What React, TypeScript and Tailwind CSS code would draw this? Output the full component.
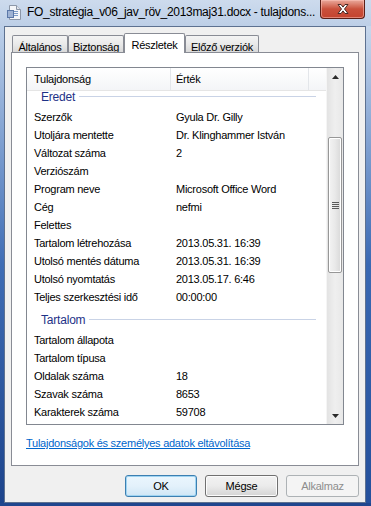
import React from 'react';

const eredet: [string, string][] = [
  ['Szerzők', 'Gyula Dr. Gilly'],
  ['Utoljára mentette', 'Dr. Klinghammer István'],
  ['Változat száma', '2'],
  ['Verziószám', ''],
  ['Program neve', 'Microsoft Office Word'],
  ['Cég', 'nefmi'],
  ['Felettes', ''],
  ['Tartalom létrehozása', '2013.05.31. 16:39'],
  ['Utolsó mentés dátuma', '2013.05.31. 16:39'],
  ['Utolsó nyomtatás', '2013.05.17. 6:46'],
  ['Teljes szerkesztési idő', '00:00:00'],
];

const tartalom: [string, string][] = [
  ['Tartalom állapota', ''],
  ['Tartalom típusa', ''],
  ['Oldalak száma', '18'],
  ['Szavak száma', '8653'],
  ['Karakterek száma', '59708'],
];

const GroupHeader = ({ title }: { title: string }) => (
  <div className="h-[25px] flex items-start pt-[7px] pl-[14px] pr-[10px]">
    <span className="text-[12px] leading-[15px] text-[#1e3287] tracking-[-0.2px]">{title}</span>
    <div className="flex-1 h-px bg-[#c9d3e6] ml-[4px] mt-[6px]" />
  </div>
);

const Row = ({ label, value }: { label: string; value: string }) => (
  <div className="h-[18px] flex items-center pl-[7px]">
    <span className="w-[142px] shrink-0 whitespace-nowrap">{label}</span>
    <span className="whitespace-nowrap">{value}</span>
  </div>
);

const Tab = ({ label, width, active }: { label: string; width: string; active?: boolean }) =>
  active ? (
    <div className={`${width} h-[20px] -mb-px relative z-10 bg-white border border-b-0 border-[#898c95] rounded-t-[2px] flex justify-center pt-[3px]`}>
      {label}
    </div>
  ) : (
    <div className={`${width} h-[17px] border border-b-0 border-[#898c95] rounded-t-[2px] bg-gradient-to-b from-[#f4f4f4] via-[#eaeaea] to-[#d9d9d9] flex justify-center pt-[3px]`}>
      {label}
    </div>
  );

const DocIcon = () => (
  <svg width="16" height="17" viewBox="0 0 16 17">
    <path d="M2.5 1.5h7l4 4v10h-11z" fill="#f4f6f9" stroke="#8c97a8" />
    <path d="M9.5 1.5v4h4" fill="#dfe4ec" stroke="#8c97a8" />
    <rect x="4" y="7" width="7" height="1" fill="#7d9cc8" />
    <rect x="4" y="9" width="7" height="1" fill="#7d9cc8" />
    <rect x="4" y="11" width="7" height="1" fill="#7d9cc8" />
    <rect x="0.5" y="6.5" width="6" height="7" fill="#9fb3d4" stroke="#5b78a8" />
  </svg>
);

const Button = ({ label, width, primary, disabled }: { label: string; width: string; primary?: boolean; disabled?: boolean }) => (
  <div
    className={`${width} h-[22px] rounded-[3px] border flex items-center justify-center ${
      disabled
        ? 'border-[#adb2b5] bg-[#f4f4f4] text-[#8d8d8d]'
        : primary
        ? 'border-[#3c7fb1] bg-gradient-to-b from-[#eaf6fd] via-[#e3f1fb] to-[#cfe6f6] shadow-[inset_0_0_0_1px_#9fd4f2]'
        : 'border-[#707070] bg-gradient-to-b from-[#f2f2f2] via-[#ebebeb] to-[#d4d4d4] shadow-[inset_0_0_0_1px_#fcfcfc]'
    }`}
  >
    {label}
  </div>
);

export default function App() {
  return (
    <div className="w-[371px] h-[506px] flex flex-col overflow-hidden font-['Liberation_Sans',Arial,sans-serif] text-[11px] tracking-[-0.25px] text-black bg-[#c6d6eb]">
      {/* title bar */}
      <div className="h-[26px] shrink-0 flex items-start bg-gradient-to-b from-[#cddbed] to-[#bdcfe7]">
        <div className="ml-[7px] mt-[4px]">
          <DocIcon />
        </div>
        <div className="ml-[4px] mt-[4px] flex-1 text-[12px] leading-[16px] tracking-[-0.3px] text-black whitespace-nowrap overflow-hidden">
          FO_stratégia_v06_jav_röv_2013maj31.docx - tulajdons...
        </div>
        <div className="w-[45px] h-[19px] mr-[6px] ml-[3px] rounded-b-[4px] border border-t-0 border-[#5a1f17] bg-gradient-to-b from-[#e9a99c] via-[#c9503b] to-[#c4432e] shadow-[inset_0_0_0_1px_rgba(255,200,190,0.5)] flex items-center justify-center">
          <svg width="14" height="12" viewBox="0 0 14 12">
            <path d="M2 1.5h3l2 2.6 2-2.6h3l-3.5 4.5 3.5 4.5h-3l-2-2.6-2 2.6h-3l3.5-4.5z" fill="#ffffff" stroke="#4a2a26" strokeWidth="1" strokeLinejoin="round" />
          </svg>
        </div>
      </div>

      <div className="flex-1 flex min-h-0">
        <div className="w-[4px] bg-gradient-to-b from-[#bdd0e9] via-[#3f6db5] to-[#1d448c]" />

        {/* client */}
        <div className="flex-1 flex flex-col border border-[#5d7190] bg-[#f0f0f0]">
          <div className="pt-[6px] pl-[7px] flex items-end h-[25px]">
            <Tab label="Általános" width="w-[56px]" />
            <Tab label="Biztonság" width="w-[56px]" />
            <Tab label="Részletek" width="w-[61px]" active />
            <Tab label="Előző verziók" width="w-[74px]" />
          </div>

          <div className="ml-[6px] w-[348px] h-[414px] bg-white border border-[#898c95] flex flex-col">
            <div className="ml-[14px] mt-[14px] w-[318px] h-[358px] border border-[#828790] flex">
              <div className="flex-1 flex flex-col min-w-0">
                <div className="h-[23px] shrink-0 flex border-b border-[#e5e5e5] bg-gradient-to-b from-white to-[#f4f5f7]">
                  <div className="w-[144px] pl-[7px] flex items-center border-r border-[#e3e6ea]">Tulajdonság</div>
                  <div className="w-[138px] pl-[5px] flex items-center border-r border-[#e3e6ea]">Érték</div>
                  <div className="flex-1" />
                </div>
                <div className="flex-1 overflow-hidden">
                  <div className="-mt-[8px]">
                    <GroupHeader title="Eredet" />
                    {eredet.map(([l, v]) => (
                      <Row key={l} label={l} value={v} />
                    ))}
                    <GroupHeader title="Tartalom" />
                    {tartalom.map(([l, v]) => (
                      <Row key={l} label={l} value={v} />
                    ))}
                  </div>
                </div>
              </div>

              {/* scrollbar */}
              <div className="w-[17px] shrink-0 flex flex-col bg-gradient-to-r from-[#e3e3e3] via-[#efefef] to-[#e8e8e8] border-l border-[#f5f5f5]">
                <div className="h-[17px] flex items-center justify-center">
                  <svg width="7" height="4" viewBox="0 0 7 4">
                    <path d="M0 4 3.5 0 7 4z" fill="#2a2a2a" />
                  </svg>
                </div>
                <div className="h-[52px]" />
                <div className="mx-[1px] h-[136px] rounded-[2px] border border-[#979797] bg-gradient-to-r from-[#f3f3f3] via-[#e9e9e9] to-[#d8d8d8] shadow-[inset_0_0_0_1px_#ffffff] flex items-center justify-center">
                  <div className="flex flex-col gap-[1px]">
                    <div className="w-[7px] h-px bg-[#5a5a5a]" />
                    <div className="w-[7px] h-px bg-[#5a5a5a]" />
                    <div className="w-[7px] h-px bg-[#5a5a5a]" />
                    <div className="w-[7px] h-px bg-[#5a5a5a]" />
                  </div>
                </div>
                <div className="flex-1" />
                <div className="h-[17px] flex items-center justify-center">
                  <svg width="7" height="4" viewBox="0 0 7 4">
                    <path d="M0 0 3.5 4 7 0z" fill="#2a2a2a" />
                  </svg>
                </div>
              </div>
            </div>

            <div className="ml-[14px] mt-[11px] leading-[15px]">
              <span className="text-[#0066cc] underline">Tulajdonságok és személyes adatok eltávolítása</span>
            </div>
          </div>

          <div className="mt-[9px] flex justify-end gap-[8px] pr-[6px]">
            <Button label="OK" width="w-[72px]" primary />
            <Button label="Mégse" width="w-[73px]" />
            <Button label="Alkalmaz" width="w-[73px]" disabled />
          </div>
        </div>

        <div className="w-[5px] bg-gradient-to-b from-[#c8d8ec] via-[#3a69b3] to-[#24509c]" />
      </div>

      <div className="h-[3px] shrink-0 bg-[#1f468e]" />
    </div>
  );
}
